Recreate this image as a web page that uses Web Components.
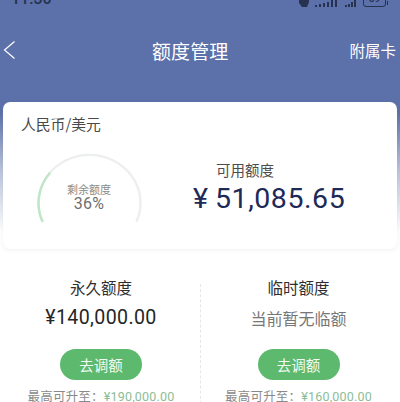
<!DOCTYPE html>
<html lang="zh">
<head>
<meta charset="utf-8">
<style>
  html, body { margin: 0; padding: 0; background: #fff; }
  body { font-family: Roboto, "Noto Sans CJK SC", sans-serif; }
</style>
</head>
<body>
<limit-app>
  <status-bar slot="top"></status-bar>
  <nav-bar slot="top" title="额度管理" action="附属卡"></nav-bar>
  <summary-card slot="top" currency="人民币/美元" percent="36%" amount="51,085.65"></summary-card>
  <quota-col slot="col" label="永久额度" value="¥140,000.00" max="¥190,000.00" shift="1"></quota-col>
  <quota-col slot="col" label="临时额度" empty="当前暂无临额" max="¥160,000.00" shift="-2" divided></quota-col>
</limit-app>

<script>
class LimitApp extends HTMLElement {
  constructor() {
    super();
    this.attachShadow({ mode: 'open' });
    this.shadowRoot.innerHTML = `
      <style>
        :host {
          display: flex;
          flex-direction: column;
          width: 400px;
          height: 402px;
          overflow: hidden;
          background: linear-gradient(#5c70a9 0, #5c70a9 112px, #b9c3da 170px, #fff 232px);
        }
        .cols {
          display: grid;
          grid-template-columns: 1fr 1fr;
          margin-top: 28px;
          flex: none;
        }
      </style>
      <slot name="top"></slot>
      <div class="cols"><slot name="col"></slot></div>
    `;
  }
}

class StatusBar extends HTMLElement {
  constructor() {
    super();
    this.attachShadow({ mode: 'open' });
    this.shadowRoot.innerHTML = `
      <style>
        :host {
          display: flex;
          flex: none;
          align-items: flex-end;
          justify-content: space-between;
          height: 7px;
          padding: 0 12px 0 11px;
          overflow: hidden;
          color: #26324f;
          font: 500 16px/16px Roboto, sans-serif;
        }
        .time { white-space: nowrap; }
        .icons { display: flex; align-items: flex-end; gap: 6px; }
        svg { display: block; }
        .batt {
          display: block;
          width: 21px;
          height: 14px;
          border: 1px solid #26324f;
          border-radius: 3px;
          font: 500 10px/13px Roboto, sans-serif;
          text-align: center;
        }
        .wrap { display: flex; align-items: flex-end; gap: 1px; }
        .tip { width: 1px; height: 4px; background: #26324f; margin-bottom: 2px; }
      </style>
      <span class="time">11:30</span>
      <div class="icons">
        <svg width="58" height="7" viewBox="0 0 58 7" fill="#26324f">
          <path d="M0 0h10v2L8 7H3L0 3z"/>
          <path d="M16 5h2v2h-2zM20 4h2v3h-2zM24 3h2v4h-2zM28 2h2v5h-2zM32 0h2v7h-2zM36 0h2v7h-2z"/>
          <path d="M46 5h2v2h-2zM49 4h2v3h-2zM52 2h2v5h-2zM55 0h2v7h-2z"/>
        </svg>
        <div class="wrap"><span class="batt">59</span><i class="tip"></i></div>
      </div>
    `;
  }
}

class NavBar extends HTMLElement {
  constructor() {
    super();
    this.attachShadow({ mode: 'open' });
    this.shadowRoot.innerHTML = `
      <style>
        :host {
          display: flex;
          flex: none;
          align-items: center;
          height: 93px;
          padding: 0 4px 7px 3px;
          color: #fff;
          font-family: "Noto Sans CJK SC", sans-serif;
          box-sizing: border-box;
        }
        svg { display: block; }
        .title { font-size: 19px; letter-spacing: .1px; margin-left: 136px; }
        .action { margin-left: auto; font-size: 15.500px; }
      </style>
      <svg width="13" height="20" viewBox="0 0 13 20" fill="none" stroke="#fff" stroke-width="1.200"><path d="M11.500 1.500 1.500 10l10 8.500"/></svg>
      <span class="title">${this.getAttribute('title')}</span>
      <span class="action">${this.getAttribute('action')}</span>
    `;
  }
}

class SummaryCard extends HTMLElement {
  constructor() {
    super();
    this.attachShadow({ mode: 'open' });
    this.shadowRoot.innerHTML = `
      <style>
        :host {
          display: block;
          flex: none;
          height: 147px;
          margin: 2px 3px 0;
          padding: 13px 18px 0;
          box-sizing: border-box;
          background: #fff;
          border-radius: 7px;
          box-shadow: 0 1px 4px rgba(90,100,130,.10);
          font-family: "Noto Sans CJK SC", sans-serif;
        }
        .cur { font-size: 14.800px; line-height: 18px; color: #4a4a4a; }
        .row { display: flex; margin-top: 20px; margin-left: 15px; }
        .gauge { position: relative; width: 106px; height: 70px; flex: none; }
        .gauge svg { display: block; }
        .gauge-text {
          position: absolute;
          top: 30px; left: 0; right: 0;
          text-align: center;
          color: #8b8b8b;
          font-size: 11px;
          line-height: 13px;
        }
        .gauge-text b {
          display: block;
          font: 400 16px/16px Roboto, sans-serif;
          color: #6f6f6f;
          letter-spacing: .3px;
        }
        .avail { margin-left: 51px; margin-top: 8px; }
        .avail-label { font-size: 14.500px; line-height: 18px; color: #4d4d4d; margin-left: 23px; }
        .amount {
          display: flex;
          font: 400 28.500px/32px Roboto, sans-serif;
          color: #1d2a57;
          letter-spacing: .55px;
          margin-top: 4px;
          white-space: nowrap;
        }
        .yen { width: 22px; }
      </style>
      <div class="cur">${this.getAttribute('currency')}</div>
      <div class="row">
        <div class="gauge">
          <svg width="106" height="70" viewBox="0 0 106 70" fill="none" stroke-width="2.400">
            <path d="M6.700 69A51 48 0 1 1 100.300 69" stroke="#eceef0"/>
            <path d="M6.700 69A51 48 0 0 1 14 19.700" stroke="#bfe6c7"/>
          </svg>
          <div class="gauge-text">剩余额度<b>${this.getAttribute('percent')}</b></div>
        </div>
        <div class="avail">
          <div class="avail-label">可用额度</div>
          <div class="amount"><span class="yen">¥</span><span>${this.getAttribute('amount')}</span></div>
        </div>
      </div>
    `;
  }
}

class QuotaCol extends HTMLElement {
  constructor() {
    super();
    this.attachShadow({ mode: 'open' });
    const shift = this.getAttribute('shift') || 0;
    const value = this.getAttribute('value');
    const main = value
      ? `<div class="value">${value}</div>`
      : `<div class="value none">${this.getAttribute('empty')}</div>`;
    this.shadowRoot.innerHTML = `
      <style>
        :host {
          display: flex;
          flex-direction: column;
          align-items: center;
          height: 130px;
          font-family: "Noto Sans CJK SC", sans-serif;
          --shift: ${shift}px;
        }
        :host([divided]) { border-left: 1px dashed #e6e6e6; margin-top: 7px; }
        :host([divided]) .inner { margin-top: -7px; }
        .inner { display: flex; flex-direction: column; align-items: center; transform: translateX(var(--shift)); }
        .label { font-size: 15.500px; line-height: 20px; color: #2e2e2e; }
        .value {
          height: 24px;
          font: 400 19.600px/24px Roboto, "Noto Sans CJK SC", sans-serif;
          color: #262626;
          margin-top: 9px;
          letter-spacing: .35px;
          white-space: nowrap;
        }
        .none { font-size: 16px; line-height: 28px; color: #777; letter-spacing: 0; }
        button {
          all: unset;
          width: 82px;
          height: 31px;
          margin-top: 19px;
          border-radius: 16px;
          background: #5cb96e;
          color: #f2fbf3;
          text-align: center;
          font-size: 14.500px;
          line-height: 31px;
        }
        .max { margin-top: 10px; font-size: 12.500px; line-height: 12px; color: #8a8a8a; white-space: nowrap; letter-spacing: .2px; }
        .max span { color: #8dbd98; font-family: Roboto, sans-serif; }
      </style>
      <div class="inner">
        <div class="label">${this.getAttribute('label')}</div>
        ${main}
        <button>去调额</button>
        <div class="max">最高可升至：<span>${this.getAttribute('max')}</span></div>
      </div>
    `;
  }
}

customElements.define('limit-app', LimitApp);
customElements.define('status-bar', StatusBar);
customElements.define('nav-bar', NavBar);
customElements.define('summary-card', SummaryCard);
customElements.define('quota-col', QuotaCol);
</script>
</body>
</html>
